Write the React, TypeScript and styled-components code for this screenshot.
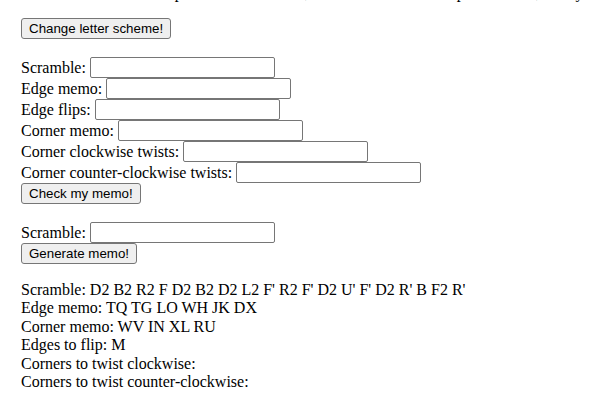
import React from 'react';
import styled, { createGlobalStyle } from 'styled-components';

const GlobalStyle = createGlobalStyle`
  html, body {
    margin: 0;
    padding: 0;
    background: #ffffff;
    overflow: hidden;
  }
  body {
    font-family: 'Liberation Serif', 'Times New Roman', serif;
    font-size: 16px;
    color: #000000;
  }
`;

const FIELDS = [
  'Scramble:',
  'Edge memo:',
  'Edge flips:',
  'Corner memo:',
  'Corner clockwise twists:',
  'Corner counter-clockwise twists:',
];

const RESULT = [
  "Scramble: D2 B2 R2 F D2 B2 D2 L2 F' R2 F' D2 U' F' D2 R' B F2 R'",
  'Edge memo: TQ TG LO WH JK DX',
  'Corner memo: WV IN XL RU',
  'Edges to flip: M',
  'Corners to twist clockwise:',
  'Corners to twist counter-clockwise:',
];

const App = () => {
  return (
    <>
      <GlobalStyle />
      <Page>
        <Intro>
          Enter the scramble or input the memo below, then this tool will compare the two, then you can see any
          mistakes.
        </Intro>
        <Section>
          <Button>Change letter scheme!</Button>
        </Section>

        <Section>
          {FIELDS.map((label) => (
            <Row key={label}>
              {label} <Field type='text' />
            </Row>
          ))}
          <Row>
            <Button>Check my memo!</Button>
          </Row>
        </Section>

        <Section>
          <Row>
            Scramble: <Field type='text' />
          </Row>
          <Row>
            <Button>Generate memo!</Button>
          </Row>
        </Section>

        <Output>
          {RESULT.map((line) => (
            <Line key={line}>{line}</Line>
          ))}
        </Output>
      </Page>
    </>
  );
};

export default App;

const Page = styled.main`
  padding: 0 0 0 21px;
  margin-top: -16px;
`;

const Intro = styled.p`
  margin: 0 0 16px;
  white-space: nowrap;
  overflow: hidden;
  line-height: 18px;
`;

const Section = styled.div`
  & + & {
    margin-top: 18px;
  }
`;

const Row = styled.div`
  height: 21px;
  display: flex;
  align-items: center;
  gap: 4px;
  white-space: nowrap;
`;

const Output = styled.div`
  margin-top: 17px;
`;

const Line = styled.div`
  line-height: 18.4px;
`;

const Field = styled.input`
  box-sizing: border-box;
  width: 185px;
  height: 21px;
  margin: 0;
  padding: 1px 2px;
  border: 1px solid #767676;
  border-radius: 2px;
  background: #ffffff;
  font: 13.33px 'Liberation Sans', Arial, sans-serif;
`;

const Button = styled.button`
  box-sizing: border-box;
  height: 21px;
  margin: 0;
  padding: 0 7px;
  border: 1px solid #767676;
  border-radius: 3px;
  background: #efefef;
  color: #000000;
  font: 13.33px 'Liberation Sans', Arial, sans-serif;
`;
